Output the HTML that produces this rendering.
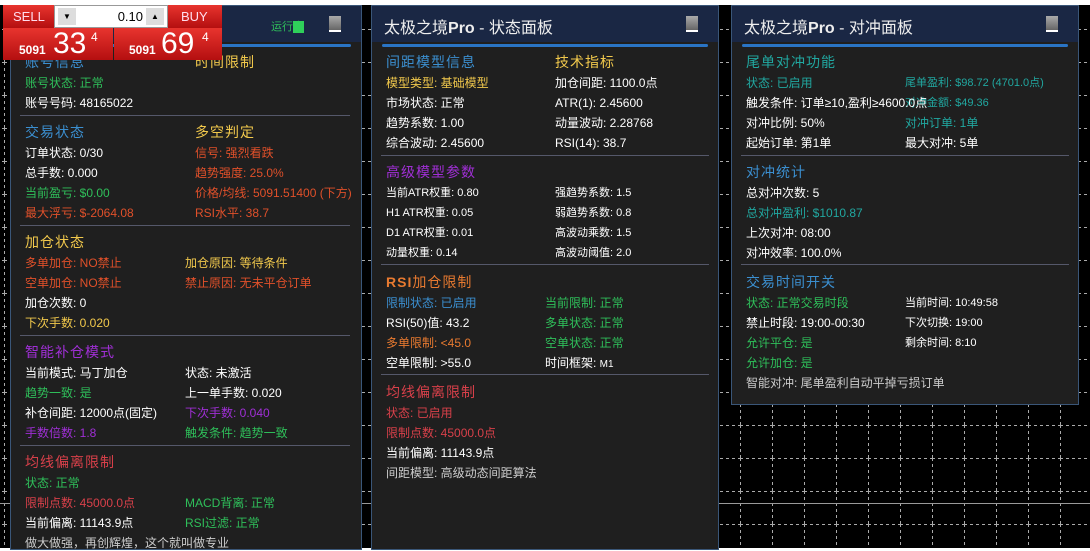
<!DOCTYPE html>
<html><head><meta charset="utf-8"><style>
*{margin:0;padding:0;box-sizing:border-box}
body{width:1090px;height:551px;overflow:hidden;background:#000;position:relative;font-family:"Liberation Sans","Noto Sans CJK SC",sans-serif;font-size:12px;color:#fff}
svg.grid{position:absolute;left:0;top:0}
.topw{position:absolute;left:0;top:0;width:1090px;height:5px;background:#fff}
.botw{position:absolute;left:0;top:548px;width:1090px;height:3px;background:#fff}
.p{position:absolute;background:#1f1f1f;border:1px solid #3a5678}
.tb{position:absolute;left:0;top:0;right:0;height:36px;background:#1a2744;font-size:16px;padding:8px 0 0 12px;color:#eee}
.tb b{font-weight:bold}
.ic{position:absolute;top:10px;right:20px;width:12px;height:16px;background:linear-gradient(#aaa,#666);border-bottom:2px solid #fff}
.bl{position:absolute;left:10px;right:10px;top:38px;height:3px;background:#2a74c4;border-radius:2px}
.t{position:absolute;white-space:nowrap;line-height:16px}
.h{font-size:14px;letter-spacing:1px}
.s{position:absolute;left:10px;right:10px;height:1px;background:#55586a}
.g{color:#2fbf5a}.w{color:#fff}.y{color:#f2c94c}.b{color:#3b8fd0}.r{color:#e0502a}.pu{color:#a02fd6}.o{color:#e87a30}.c{color:#21a7a0}.pk{color:#d8404a}
.red{position:absolute;background:linear-gradient(#e8342e,#b40f10);color:#fff}
</style></head><body>
<svg class="grid" width="1090" height="551">
<defs><pattern id="gp" x="4" y="-4" width="32" height="33" patternUnits="userSpaceOnUse">
<line x1="0.5" y1="0" x2="0.5" y2="33" stroke="#aaa" stroke-width="1" stroke-dasharray="3,3"/>
<line x1="0" y1="0.5" x2="32" y2="0.5" stroke="#aaa" stroke-width="1" stroke-dasharray="3,3"/>
</pattern></defs>
<rect x="0" y="5" width="1090" height="543" fill="url(#gp)"/>
<line x1="0" y1="503.5" x2="1090" y2="503.5" stroke="#999" stroke-width="1"/>
</svg>
<div class="topw"></div><div class="botw"></div>

<div class="p" style="left:10px;top:5px;width:352px;height:545px">
<div class="tb"><span class="g" style="position:absolute;left:260px;top:12px;font-size:11px">运行<span style="background:#2fd05a;color:#2fd05a">中</span></span></div><div class="ic"></div><div class="bl"></div>
</div>
<div class="p" style="left:371px;top:5px;width:348px;height:545px">
<div class="tb">太极之境<b>Pro</b> - 状态面板</div><div class="ic"></div><div class="bl"></div>
</div>
<div class="p" style="left:731px;top:5px;width:348px;height:400px">
<div class="tb">太极之境<b>Pro</b> - 对冲面板</div><div class="ic"></div><div class="bl"></div>
</div>

<div class="t h b" style="left:25px;top:54px">账号信息</div>
<div class="t h y" style="left:195px;top:54px">时间限制</div>
<div class="t g" style="left:25px;top:75px">账号状态: 正常</div>
<div class="t w" style="left:25px;top:95px">账号号码: 48165022</div>
<div class="s" style="left:20px;width:330px;top:115px"></div>
<div class="t h b" style="left:25px;top:124px">交易状态</div>
<div class="t h y" style="left:195px;top:124px">多空判定</div>
<div class="t w" style="left:25px;top:145px">订单状态: 0/30</div>
<div class="t r" style="left:195px;top:145px">信号: 强烈看跌</div>
<div class="t w" style="left:25px;top:165px">总手数: 0.000</div>
<div class="t r" style="left:195px;top:165px">趋势强度: 25.0%</div>
<div class="t g" style="left:25px;top:185px">当前盈亏: $0.00</div>
<div class="t r" style="left:195px;top:185px">价格/均线: 5091.51400 (下方)</div>
<div class="t r" style="left:25px;top:205px">最大浮亏: $-2064.08</div>
<div class="t r" style="left:195px;top:205px">RSI水平: 38.7</div>
<div class="s" style="left:20px;width:330px;top:225px"></div>
<div class="t h y" style="left:25px;top:234px">加仓状态</div>
<div class="t r" style="left:25px;top:255px">多单加仓: NO禁止</div>
<div class="t y" style="left:185px;top:255px">加仓原因: 等待条件</div>
<div class="t r" style="left:25px;top:275px">空单加仓: NO禁止</div>
<div class="t r" style="left:185px;top:275px">禁止原因: 无未平仓订单</div>
<div class="t w" style="left:25px;top:295px">加仓次数: 0</div>
<div class="t y" style="left:25px;top:315px">下次手数: 0.020</div>
<div class="s" style="left:20px;width:330px;top:335px"></div>
<div class="t h pu" style="left:25px;top:344px">智能补仓模式</div>
<div class="t w" style="left:25px;top:365px">当前模式: 马丁加仓</div>
<div class="t w" style="left:185px;top:365px">状态: 未激活</div>
<div class="t g" style="left:25px;top:385px">趋势一致: 是</div>
<div class="t w" style="left:185px;top:385px">上一单手数: 0.020</div>
<div class="t w" style="left:25px;top:405px">补仓间距: 12000点(固定)</div>
<div class="t pu" style="left:185px;top:405px">下次手数: 0.040</div>
<div class="t pu" style="left:25px;top:425px">手数倍数: 1.8</div>
<div class="t g" style="left:185px;top:425px">触发条件: 趋势一致</div>
<div class="s" style="left:20px;width:330px;top:445px"></div>
<div class="t h pk" style="left:25px;top:454px">均线偏离限制</div>
<div class="t g" style="left:25px;top:475px">状态: 正常</div>
<div class="t pk" style="left:25px;top:495px">限制点数: 45000.0点</div>
<div class="t g" style="left:185px;top:495px">MACD背离: 正常</div>
<div class="t w" style="left:25px;top:515px">当前偏离: 11143.9点</div>
<div class="t g" style="left:185px;top:515px">RSI过滤: 正常</div>
<div class="t" style="left:25px;top:535px;color:#ccc">做大做强，再创辉煌，这个就叫做专业</div>

<div class="t h b" style="left:386px;top:54px">间距模型信息</div>
<div class="t h y" style="left:555px;top:54px">技术指标</div>
<div class="t y" style="left:386px;top:75px">模型类型: 基础模型</div>
<div class="t w" style="left:555px;top:75px">加仓间距: 1100.0点</div>
<div class="t w" style="left:386px;top:95px">市场状态: 正常</div>
<div class="t w" style="left:555px;top:95px">ATR(1): 2.45600</div>
<div class="t w" style="left:386px;top:115px">趋势系数: 1.00</div>
<div class="t w" style="left:555px;top:115px">动量波动: 2.28768</div>
<div class="t w" style="left:386px;top:135px">综合波动: 2.45600</div>
<div class="t w" style="left:555px;top:135px">RSI(14): 38.7</div>
<div class="s" style="left:381px;width:328px;top:155px"></div>
<div class="t h pu" style="left:386px;top:164px">高级模型参数</div>
<div class="t w" style="left:386px;top:185px;font-size:11px">当前ATR权重: 0.80</div>
<div class="t w" style="left:555px;top:185px;font-size:11px">强趋势系数: 1.5</div>
<div class="t w" style="left:386px;top:205px;font-size:11px">H1 ATR权重: 0.05</div>
<div class="t w" style="left:555px;top:205px;font-size:11px">弱趋势系数: 0.8</div>
<div class="t w" style="left:386px;top:225px;font-size:11px">D1 ATR权重: 0.01</div>
<div class="t w" style="left:555px;top:225px;font-size:11px">高波动乘数: 1.5</div>
<div class="t w" style="left:386px;top:245px;font-size:11px">动量权重: 0.14</div>
<div class="t w" style="left:555px;top:245px;font-size:11px">高波动阈值: 2.0</div>
<div class="s" style="left:381px;width:328px;top:264px"></div>
<div class="t h o" style="left:386px;top:274px"><b>RSI</b>加仓限制</div>
<div class="t b" style="left:386px;top:295px">限制状态: 已启用</div>
<div class="t g" style="left:545px;top:295px">当前限制: 正常</div>
<div class="t w" style="left:386px;top:315px">RSI(50)值: 43.2</div>
<div class="t g" style="left:545px;top:315px">多单状态: 正常</div>
<div class="t o" style="left:386px;top:335px">多单限制: &lt;45.0</div>
<div class="t g" style="left:545px;top:335px">空单状态: 正常</div>
<div class="t w" style="left:386px;top:355px">空单限制: &gt;55.0</div>
<div class="t w" style="left:545px;top:355px">时间框架: <span style="font-size:10px">M1</span></div>
<div class="s" style="left:381px;width:328px;top:374px"></div>
<div class="t h pk" style="left:386px;top:384px">均线偏离限制</div>
<div class="t pk" style="left:386px;top:405px">状态: 已启用</div>
<div class="t pk" style="left:386px;top:425px">限制点数: 45000.0点</div>
<div class="t w" style="left:386px;top:445px">当前偏离: 11143.9点</div>
<div class="t" style="left:386px;top:465px;color:#ccc">间距模型: 高级动态间距算法</div>

<div class="t h c" style="left:746px;top:54px">尾单对冲功能</div>
<div class="t c" style="left:746px;top:75px">状态: 已启用</div>
<div class="t c" style="left:905px;top:75px;font-size:11px">尾单盈利: $98.72 (4701.0点)</div>
<div class="t c" style="left:905px;top:95px;font-size:11px">对冲金额: $49.36</div>
<div class="t w" style="left:746px;top:95px">触发条件: 订单≥10,盈利≥4600.0点</div>
<div class="t w" style="left:746px;top:115px">对冲比例: 50%</div>
<div class="t c" style="left:905px;top:115px">对冲订单: 1单</div>
<div class="t w" style="left:746px;top:135px">起始订单: 第1单</div>
<div class="t w" style="left:905px;top:135px">最大对冲: 5单</div>
<div class="s" style="left:741px;width:328px;top:155px"></div>
<div class="t h b" style="left:746px;top:164px">对冲统计</div>
<div class="t w" style="left:746px;top:185px">总对冲次数: 5</div>
<div class="t c" style="left:746px;top:205px">总对冲盈利: $1010.87</div>
<div class="t w" style="left:746px;top:225px">上次对冲: 08:00</div>
<div class="t w" style="left:746px;top:245px">对冲效率: 100.0%</div>
<div class="s" style="left:741px;width:328px;top:264px"></div>
<div class="t h b" style="left:746px;top:274px">交易时间开关</div>
<div class="t g" style="left:746px;top:295px">状态: 正常交易时段</div>
<div class="t w" style="left:905px;top:295px;font-size:11px">当前时间: 10:49:58</div>
<div class="t w" style="left:746px;top:315px">禁止时段: 19:00-00:30</div>
<div class="t w" style="left:905px;top:315px;font-size:11px">下次切换: 19:00</div>
<div class="t g" style="left:746px;top:335px">允许平仓: 是</div>
<div class="t w" style="left:905px;top:335px;font-size:11px">剩余时间: 8:10</div>
<div class="t g" style="left:746px;top:355px">允许加仓: 是</div>
<div class="t" style="left:746px;top:375px;color:#ccc">智能对冲: 尾单盈利自动平掉亏损订单</div>

<div class="red" style="left:3px;top:5px;width:51px;height:23px;font-size:13px;padding:4px 0 0 10px;color:#fde">SELL</div>
<div style="position:absolute;left:54px;top:5px;width:114px;height:23px;background:#fff;border:1px solid #999"><div style="position:absolute;left:3px;top:2px;width:18px;height:17px;background:#ddd;font-size:8px;text-align:center;line-height:17px;color:#000">▼</div><div style="position:absolute;right:24px;top:3px;font-size:13px;color:#000">0.10</div><div style="position:absolute;right:3px;top:2px;width:18px;height:17px;background:#ddd;font-size:8px;text-align:center;line-height:17px;color:#000">▲</div></div>
<div class="red" style="left:168px;top:5px;width:54px;height:23px;font-size:13px;padding:4px 0 0 13px;color:#fde">BUY</div>
<div class="red" style="left:3px;top:28px;width:110px;height:32px"><span style="position:absolute;left:16px;top:15px;font-size:12px;font-weight:bold">5091</span><span style="position:absolute;left:50px;top:0;font-size:30px;line-height:32px">33</span><span style="position:absolute;left:88px;top:2px;font-size:12px">4</span></div>
<div class="red" style="left:114px;top:28px;width:108px;height:32px"><span style="position:absolute;left:15px;top:15px;font-size:12px;font-weight:bold">5091</span><span style="position:absolute;left:47px;top:0;font-size:30px;line-height:32px">69</span><span style="position:absolute;left:88px;top:2px;font-size:12px">4</span></div>
</body></html>
